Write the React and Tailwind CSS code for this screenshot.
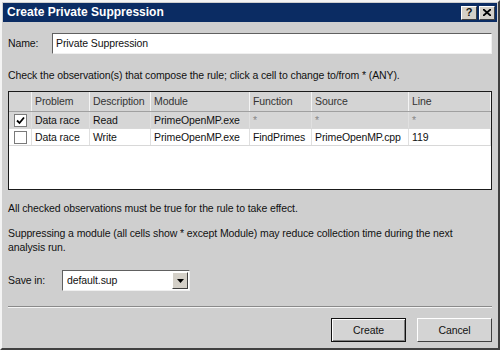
export default function App() {
  const rows = [
    { checked: true, problem: 'Data race', desc: 'Read', module: 'PrimeOpenMP.exe', fn: '*', src: '*', line: '*', any: true },
    { checked: false, problem: 'Data race', desc: 'Write', module: 'PrimeOpenMP.exe', fn: 'FindPrimes', src: 'PrimeOpenMP.cpp', line: '119' },
  ];
  const cols = ['w-[23px]', 'w-[58px]', 'w-[61px]', 'w-[99px]', 'w-[62px]', 'w-[97px]', 'flex-1'];

  return (
    <div className="w-[500px] h-[350px] bg-[#cfcfcf] border-t-2 border-l-2 border-t-[#f4f4f4] border-l-[#f4f4f4] border-r-2 border-b-2 border-r-[#404040] border-b-[#404040] text-[10.5px] leading-[13px] tracking-[-0.1px] text-[#111] font-['Liberation_Sans',sans-serif] flex flex-col overflow-hidden">
      {/* Title bar */}
      <div className="mx-[1px] mt-[1px] h-[19px] bg-[#0b2c63] flex items-center justify-between pl-[4px] pr-[2px]">
        <span className="text-white font-bold text-[12px] tracking-normal">Create Private Suppression</span>
        <div className="flex gap-[2px]">
          <div className="w-[16px] h-[14px] bg-[#d4d0c8] border border-t-white border-l-white border-r-[#404040] border-b-[#404040] flex items-center justify-center font-bold text-[11px] leading-none">?</div>
          <div className="w-[16px] h-[14px] bg-[#d4d0c8] border border-t-white border-l-white border-r-[#404040] border-b-[#404040] flex items-center justify-center">
            <svg width="8" height="7" viewBox="0 0 8 7">
              <path d="M0 0 L8 7 M8 0 L0 7" stroke="#000" strokeWidth="1.8" />
            </svg>
          </div>
        </div>
      </div>

      <div className="flex-1 flex flex-col px-[6px]">
        {/* Name */}
        <div className="flex items-center mt-[11px] h-[21px]">
          <span className="w-[44px]">Name:</span>
          <div className="flex-1 h-[21px] bg-white border border-t-[#606060] border-l-[#606060] border-r-[#f0f0f0] border-b-[#f0f0f0] flex items-center pl-[3px]">
            Private Suppression
          </div>
        </div>

        <p className="mt-[15px]">Check the observation(s) that compose the rule; click a cell to change to/from * (ANY).</p>

        {/* Table */}
        <div className="mt-[9px] h-[99px] bg-white border border-[#1a1a1a] flex flex-col">
          <div className="h-[20px] flex bg-[#d4d4d4] border-b border-[#a0a0a0]">
            {['', 'Problem', 'Description', 'Module', 'Function', 'Source', 'Line'].map((h, i) => (
              <div key={i} className={`${cols[i]} border-r border-[#f4f4f4] flex items-center pl-[3px] text-[#333]`}>{h}</div>
            ))}
          </div>
          {rows.map((r, ri) => (
            <div key={ri} className={`h-[17px] flex border-b border-[#d8d8d8] ${ri === 0 ? 'bg-[#d6d6d6]' : 'bg-white'}`}>
              <div className={`${cols[0]} border-r border-[#e0e0e0] flex items-center justify-center`}>
                <div className="w-[13px] h-[13px] bg-white border border-[#7a7a7a] flex items-center justify-center">
                  {r.checked && (
                    <svg width="9" height="9" viewBox="0 0 9 9">
                      <path d="M1 4.5 L3.5 7 L8 1.5" stroke="#000" strokeWidth="1.8" fill="none" />
                    </svg>
                  )}
                </div>
              </div>
              {[r.problem, r.desc, r.module, r.fn, r.src, r.line].map((c, ci) => (
                <div key={ci} className={`${cols[ci + 1]} border-r border-[#e0e0e0] flex items-center pl-[3px] whitespace-nowrap overflow-hidden ${r.any && ci >= 3 ? 'text-[#888]' : ''}`}>{c}</div>
              ))}
            </div>
          ))}
        </div>

        <p className="mt-[12px]">All checked observations must be true for the rule to take effect.</p>
        <p className="mt-[11px] leading-[14px]">Suppressing a module (all cells show * except Module) may reduce collection time during the next analysis run.</p>

        {/* Save in */}
        <div className="flex items-center mt-[16px] h-[21px]">
          <span className="w-[54px]">Save in:</span>
          <div className="w-[128px] h-[21px] bg-white border border-t-[#606060] border-l-[#606060] border-r-[#f0f0f0] border-b-[#f0f0f0] flex items-center pl-[4px] pr-[1px] justify-between">
            <span>default.sup</span>
            <div className="w-[16px] h-[17px] bg-[#d4d0c8] border border-t-white border-l-white border-r-[#404040] border-b-[#404040] flex items-center justify-center">
              <svg width="7" height="4" viewBox="0 0 7 4"><path d="M0 0 H7 L3.5 4 Z" fill="#000" /></svg>
            </div>
          </div>
        </div>

        <div className="mt-[15px] border-t border-t-[#8a8a8a] border-b border-b-[#f4f4f4]" />

        <div className="flex justify-end gap-[11px] mt-[10px]">
          <button className="w-[75px] h-[24px] bg-[#d4d4d4] border border-[#111] shadow-[inset_1px_1px_0_#fff,inset_-1px_-1px_0_#808080]">Create</button>
          <button className="w-[75px] h-[24px] bg-[#d4d4d4] border border-t-white border-l-white border-r-[#404040] border-b-[#404040]">Cancel</button>
        </div>
      </div>
    </div>
  );
}
